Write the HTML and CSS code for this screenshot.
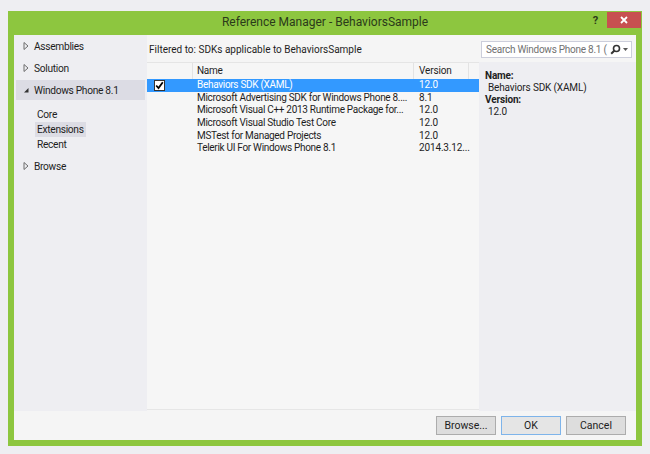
FILE: index.html
```html
<!DOCTYPE html>
<html lang="en">
<head>
    <meta charset="UTF-8">
    <title>Reference Manager - BehaviorsSample</title>
    <link rel="stylesheet" href="styles.css">
</head>
<body>
    <div class="window">
        <div class="titlebar">
            <div></div>
            <div class="title">Reference Manager - BehaviorsSample</div>
            <div class="title-controls">
                <span class="help">?</span>
                <button class="close-btn">
                    <svg width="8" height="8" viewBox="0 0 8 8"><path d="M1 1L7 7M7 1L1 7" stroke="#fff" stroke-width="1.8"/></svg>
                </button>
            </div>
        </div>
        <div class="frame">
            <div class="main">
                <div class="nav">
                    <div class="nav-item">
                        <svg class="arrow" width="6" height="8" viewBox="0 0 6 8"><path d="M1 0.5L5 4L1 7.5Z" fill="none" stroke="#6d6d6d"/></svg>
                        Assemblies
                    </div>
                    <div class="nav-item">
                        <svg class="arrow" width="6" height="8" viewBox="0 0 6 8"><path d="M1 0.5L5 4L1 7.5Z" fill="none" stroke="#6d6d6d"/></svg>
                        Solution
                    </div>
                    <div class="nav-item selected">
                        <svg class="arrow" width="6" height="8" viewBox="0 0 6 8"><path d="M5.5 2L5.5 6.5L1 6.5Z" fill="#333"/></svg>
                        Windows Phone 8.1
                    </div>
                    <div class="sub-items">
                        <div class="sub-item">Core</div>
                        <div class="sub-item active">Extensions</div>
                        <div class="sub-item">Recent</div>
                    </div>
                    <div class="nav-item">
                        <svg class="arrow" width="6" height="8" viewBox="0 0 6 8"><path d="M1 0.5L5 4L1 7.5Z" fill="none" stroke="#6d6d6d"/></svg>
                        Browse
                    </div>
                </div>
                <div class="content">
                    <div class="toolbar">
                        <div class="filter">Filtered to: SDKs applicable to BehaviorsSample</div>
                        <div class="search">
                            <span class="search-text">Search Windows Phone 8.1 (</span>
                            <svg width="11" height="11" viewBox="0 0 11 11"><circle cx="6.5" cy="4.5" r="3" fill="none" stroke="#333" stroke-width="1.6"/><path d="M4.5 6.5L1.2 9.8" stroke="#333" stroke-width="2"/></svg>
                            <svg width="5" height="3" viewBox="0 0 5 3"><path d="M0 0H5L2.5 3Z" fill="#555"/></svg>
                        </div>
                    </div>
                    <div class="panes">
                        <div class="list">
                            <div class="row header">
                                <div class="col-check"></div>
                                <div class="col-name">Name</div>
                                <div class="col-version">Version</div>
                            </div>
                            <div class="row selected">
                                <div class="col-check">
                                    <span class="checkbox">
                                        <svg width="9" height="9" viewBox="0 0 9 9"><path d="M1.2 4.5L3.5 7L7.8 1.2" fill="none" stroke="#000" stroke-width="1.8"/></svg>
                                    </span>
                                </div>
                                <div class="col-name">Behaviors SDK (XAML)</div>
                                <div class="col-version">12.0</div>
                            </div>
                            <div class="row">
                                <div class="col-check"></div>
                                <div class="col-name">Microsoft Advertising SDK for Windows Phone 8....</div>
                                <div class="col-version">8.1</div>
                            </div>
                            <div class="row">
                                <div class="col-check"></div>
                                <div class="col-name">Microsoft Visual C++ 2013 Runtime Package for...</div>
                                <div class="col-version">12.0</div>
                            </div>
                            <div class="row">
                                <div class="col-check"></div>
                                <div class="col-name">Microsoft Visual Studio Test Core</div>
                                <div class="col-version">12.0</div>
                            </div>
                            <div class="row">
                                <div class="col-check"></div>
                                <div class="col-name">MSTest for Managed Projects</div>
                                <div class="col-version">12.0</div>
                            </div>
                            <div class="row">
                                <div class="col-check"></div>
                                <div class="col-name">Telerik UI For Windows Phone 8.1</div>
                                <div class="col-version">2014.3.12...</div>
                            </div>
                        </div>
                        <div class="details">
                            <div class="label">Name:</div>
                            <div class="value">Behaviors SDK (XAML)</div>
                            <div class="label">Version:</div>
                            <div class="value">12.0</div>
                        </div>
                    </div>
                </div>
            </div>
            <div class="footer">
                <button class="btn">Browse...</button>
                <button class="btn default">OK</button>
                <button class="btn">Cancel</button>
            </div>
        </div>
    </div>
</body>
</html>
```

FILE: styles.css
```css
body {
    margin: 0;
    padding: 11px 0 0 8px;
    background-color: #eeeef2;
    font-family: Roboto, "Open Sans", sans-serif;
    font-size: 10px;
    letter-spacing: -0.15px;
    color: #1e1e1e;
}
.window {
    width: 634px;
    height: 435px;
    background-color: #8dc63f;
    display: flex;
    flex-direction: column;
}
.titlebar {
    height: 24px;
    display: grid;
    grid-template-columns: 1fr auto 1fr;
    align-items: start;
}
.title {
    font-size: 12px;
    letter-spacing: 0;
    color: #2b3a1a;
    line-height: 23px;
}
.title-controls {
    display: flex;
    justify-content: flex-end;
    align-items: center;
    padding: 1px 1px 0 0;
}
.help {
    font-weight: bold;
    font-size: 11px;
    color: #2b3a1a;
    margin-right: 9px;
}
.close-btn {
    width: 34px;
    height: 16px;
    border: none;
    padding: 0;
    background-color: #c75050;
    display: flex;
    align-items: center;
    justify-content: center;
}
.frame {
    flex: 1;
    margin: 0 6px 6px;
    background-color: #f5f5f5;
    display: flex;
    flex-direction: column;
}
.main {
    height: 376px;
    display: flex;
}
.nav {
    width: 133px;
    background-color: #eeeef2;
    padding: 1px 0 0 2px;
    box-sizing: border-box;
    font-size: 10.2px;
    letter-spacing: -0.3px;
}
.nav-item {
    display: flex;
    align-items: center;
    height: 20px;
    margin: 0 2px 2px 0;
    padding-left: 7px;
    gap: 5px;
}
.arrow {
    flex-shrink: 0;
}
.sub-items {
    padding: 5px 0 4px 19px;
}
.sub-item {
    height: 15px;
    line-height: 15px;
    padding: 0 2px;
    width: fit-content;
}
.nav-item.selected,
.sub-item.active {
    background-color: #dcdce4;
}
.content {
    flex: 1;
    display: flex;
    flex-direction: column;
}
.toolbar {
    height: 27px;
    display: flex;
    align-items: center;
    justify-content: space-between;
    padding: 0 4px 0 2px;
}
.filter {
    margin-top: 1px;
    letter-spacing: 0;
}
.search {
    width: 151px;
    height: 17px;
    box-sizing: border-box;
    background-color: #fff;
    border: 1px solid #cccedb;
    display: flex;
    align-items: center;
    gap: 2px;
    padding: 0 3px 0 4px;
    margin-top: 1px;
}
.search-text {
    flex: 1;
    color: #717171;
    white-space: nowrap;
    letter-spacing: -0.25px;
}
.panes {
    flex: 1;
    display: flex;
}
.list {
    width: 332px;
    background-color: #f6f6f6;
    border-bottom: 1px solid #e6e6e6;
    margin-bottom: 1px;
}
.row {
    display: flex;
    height: 12.7px;
    line-height: 12.7px;
    white-space: nowrap;
}
.row.header {
    height: 16px;
    line-height: 16px;
    border-top: 1px solid #e5e5e5;
}
.row.header > div {
    border-right: 1px solid #e3e3e3;
}
.row.header .col-version {
    width: 55px;
    box-sizing: border-box;
}
.row.selected {
    background-color: #3399ff;
    color: #fff;
}
.col-check {
    width: 46px;
    display: flex;
    align-items: center;
    padding-left: 7px;
    box-sizing: border-box;
}
.col-name {
    width: 221px;
    padding-left: 4px;
    box-sizing: border-box;
    overflow: hidden;
    letter-spacing: -0.3px;
}
.col-version {
    padding-left: 5px;
}
.checkbox {
    width: 9px;
    height: 9px;
    background-color: #fff;
    border: 1px solid #333;
    display: flex;
}
.details {
    flex: 1;
    background-color: #eeeef2;
    padding: 8px 6px 0 6px;
}
.label {
    font-weight: bold;
    line-height: 12px;
}
.value {
    line-height: 12px;
    padding-left: 3px;
}
.footer {
    flex: 1;
    display: flex;
    justify-content: flex-end;
    align-items: center;
    gap: 5px;
    padding-right: 10px;
}
.btn {
    width: 60px;
    height: 19px;
    font-family: Roboto, "Open Sans", sans-serif;
    font-size: 10.5px;
    color: #1e1e1e;
    background-color: #dddddd;
    border: 1px solid #acacac;
    padding: 0;
}
.btn.default {
    background-color: #e5e5e5;
    border-color: #7eb4ea;
}
```
